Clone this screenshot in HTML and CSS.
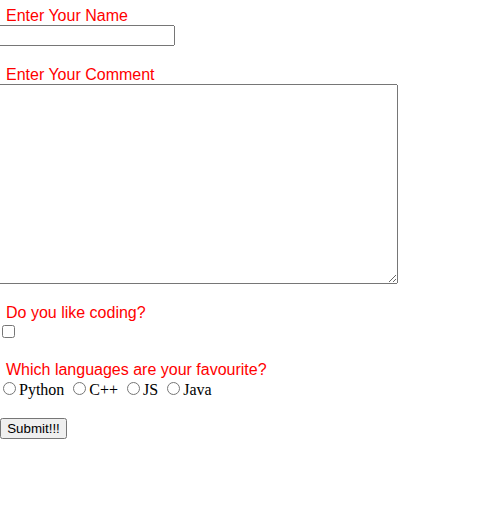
FILE: index.html
```html
<!DOCTYPE html>
<html>
<head>
<meta charset="utf-8">
<link rel="stylesheet" href="styles.css">
</head>
<body>
<form class="form">
  <label class="label" for="name">Enter Your Name</label>
  <input class="name-input" type="text" id="name">
  <label class="label label-gap" for="comment">Enter Your Comment</label>
  <textarea class="comment" id="comment"></textarea>
  <label class="label label-gap2">Do you like coding?</label>
  <input class="check" type="checkbox">
  <label class="label label-gap3">Which languages are your favourite?</label>
  <div class="radios"><input class="radio" type="radio" name="lang" id="py"><label for="py">Python</label> <input class="radio" type="radio" name="lang" id="cpp"><label for="cpp">C++</label> <input class="radio" type="radio" name="lang" id="js"><label for="js">JS</label> <input class="radio" type="radio" name="lang" id="java"><label for="java">Java</label></div>
  <button class="submit" type="button">Submit!!!</button>
</form>
</body>
</html>
```

FILE: styles.css
```css
html, body {
  margin: 0;
  padding: 0;
  background: #ffffff;
}

.form {
  display: flex;
  flex-direction: column;
  align-items: flex-start;
  padding-top: 7px;
  margin-left: -2px;
}

.label {
  font-family: "Liberation Sans", Arial, sans-serif;
  font-size: 16px;
  line-height: 18px;
  color: #ff0000;
  margin-left: 8px;
}

.label-gap {
  margin-top: 20px;
}

.label-gap2 {
  margin-top: 20px;
}

.label-gap3 {
  margin-top: 23px;
}

.name-input {
  box-sizing: border-box;
  width: 177px;
  height: 21px;
  margin: 0;
  font-family: "Liberation Sans", Arial, sans-serif;
  font-size: 13.33px;
}

.comment {
  box-sizing: border-box;
  width: 400px;
  height: 200px;
  margin: 0;
  font-family: "Liberation Mono", monospace;
  font-size: 13.33px;
}

.check {
  width: 13px;
  height: 13px;
  margin: 3px 0 0 4px;
}

.radios {
  font-family: "Liberation Serif", "Times New Roman", serif;
  font-size: 16px;
  color: #000000;
  margin-top: 0;
  white-space: nowrap;
}

.radio {
  width: 13px;
  height: 13px;
  margin: 3px 3px 0 5px;
}

.submit {
  box-sizing: border-box;
  height: 21px;
  width: 67px;
  padding: 1px 4px;
  margin: 19px 0 0 2px;
  font-family: "Liberation Sans", Arial, sans-serif;
  font-size: 13.33px;
}
```
